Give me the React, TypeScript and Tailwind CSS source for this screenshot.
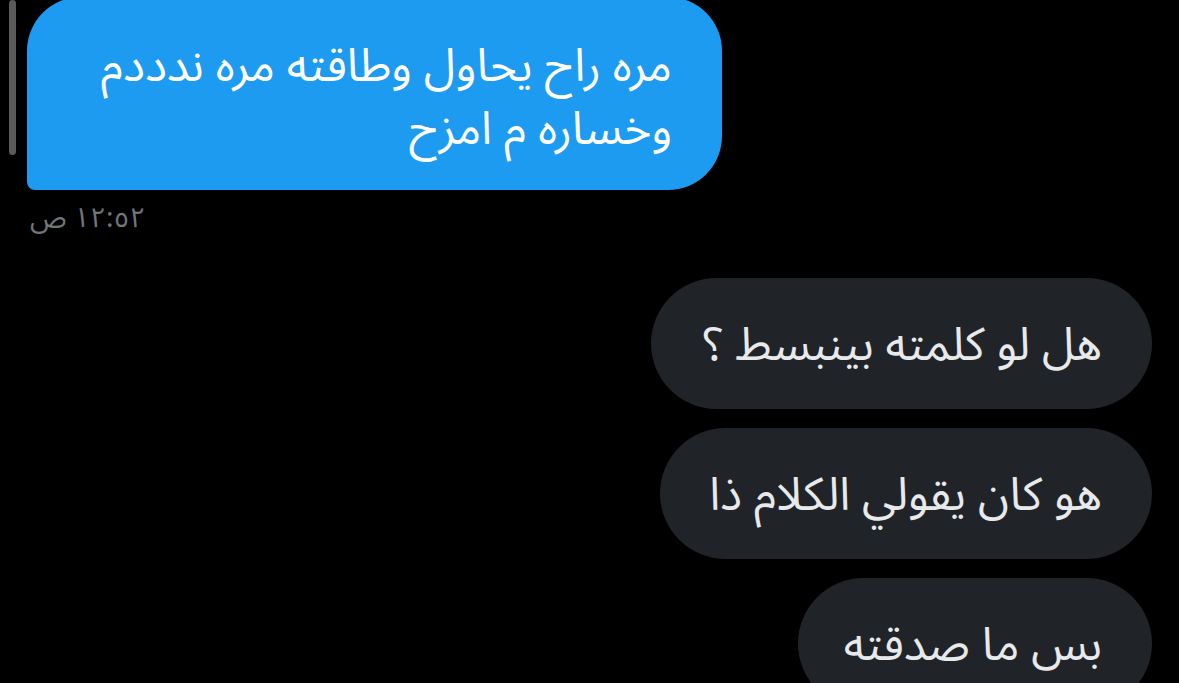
import React from "react";

const font = { fontFamily: '"Noto Sans Arabic", "DejaVu Sans", "Noto Sans", sans-serif' };

export default function App() {
  return (
    <div className="w-[1179px] h-[683px] bg-black overflow-hidden relative" style={font}>
      <div className="absolute left-[9px] top-0 w-[7px] h-[155px] rounded-full bg-[#5a5a5a]" />
      <div className="flex flex-col px-[27px] -mt-[3px]">
        <div className="flex justify-start">
          <div
            dir="rtl"
            className="w-[695px] h-[193px] bg-[#1d9bf0] rounded-[54px] rounded-bl-[8px] pr-[50px] pt-[38px] text-white text-[46px] leading-[63px] whitespace-nowrap"
          >
            مره راح يحاول وطاقته مره ندددم
            <br />
            وخساره م امزح
          </div>
        </div>
        <div dir="rtl" className="flex justify-end mt-[14px] pl-[3px] text-[#71767b] text-[28px] leading-[30px]">
          ١٢:٥٢ ص
        </div>
        <div className="flex flex-col items-end gap-[19px] mt-[44px]">
          <div dir="rtl" className="w-[501px] h-[131px] bg-[#202327] rounded-[66px] flex items-center pr-[50px] pt-[4px] text-[#e7e9ea] text-[46px]">
            هل لو كلمته بينبسط ؟
          </div>
          <div dir="rtl" className="w-[492px] h-[131px] bg-[#202327] rounded-[66px] flex items-center pr-[50px] pt-[4px] text-[#e7e9ea] text-[46px]">
            هو كان يقولي الكلام ذا
          </div>
          <div dir="rtl" className="w-[354px] h-[131px] bg-[#202327] rounded-[66px] flex items-center pr-[50px] pt-[4px] text-[#e7e9ea] text-[46px]">
            بس ما صدقته
          </div>
        </div>
      </div>
    </div>
  );
}
